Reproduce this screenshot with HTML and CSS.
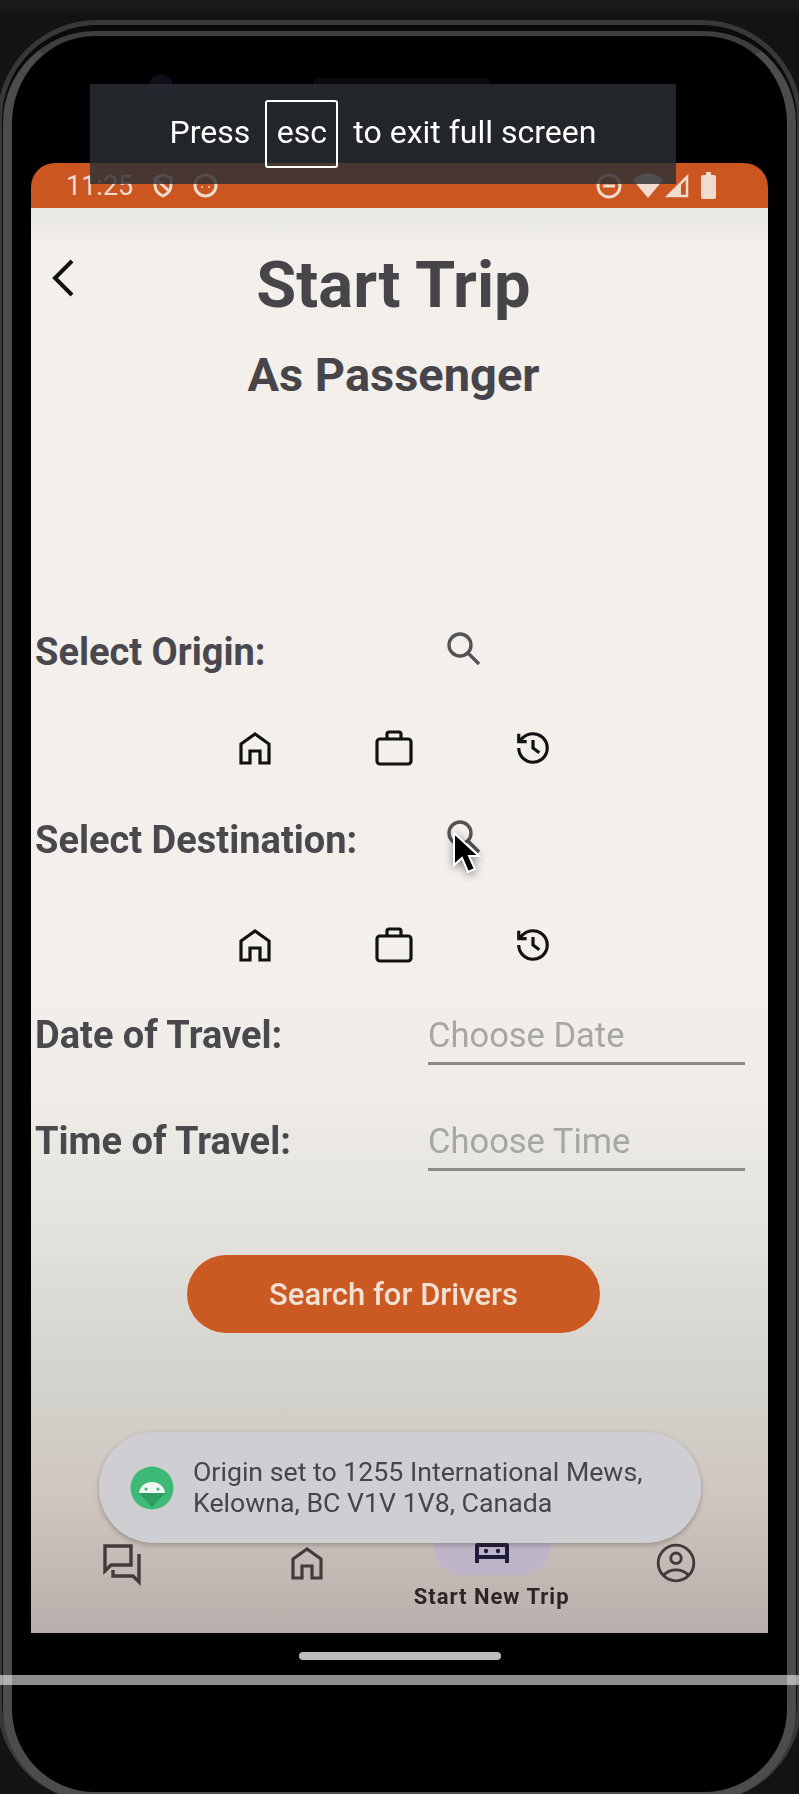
FILE: index.html
```html
<!DOCTYPE html>
<html lang="en">
<head>
    <meta charset="UTF-8">
    <meta name="viewport" content="width=device-width, initial-scale=1.0">
    <title>Start Trip</title>
    <link rel="stylesheet" href="styles.css">
</head>
<body>
    <div class="device">
        <div class="ring-outer"></div>
        <div class="ring-inner"></div>
        <div class="camera"></div>
        <div class="speaker"></div>

        <div class="screen">
            <div class="status-bar">
                <div class="status-left">
                    <span class="clock">11:25</span>
                    <svg class="status-icon" width="22" height="25" viewBox="0 0 22 25" fill="none" stroke="currentColor" stroke-width="3">
                        <path d="M11 2l8 3v7c0 5-3.500 9-8 11-4.500-2-8-6-8-11V5z"/>
                        <path d="M4 6l14 13"/>
                    </svg>
                    <svg class="status-icon" width="25" height="25" viewBox="0 0 25 25" fill="none" stroke="currentColor" stroke-width="3">
                        <circle cx="12.500" cy="12.500" r="10.500"/>
                        <circle cx="9" cy="14" r="1" fill="currentColor" stroke="none"/>
                        <circle cx="16" cy="14" r="1" fill="currentColor" stroke="none"/>
                    </svg>
                </div>
                <div class="status-right">
                    <svg class="status-icon" width="26" height="26" viewBox="0 0 26 26" fill="none" stroke="currentColor" stroke-width="3">
                        <circle cx="13" cy="13" r="11"/>
                        <path d="M7 13h12"/>
                    </svg>
                    <svg class="status-icon wifi" width="30" height="25" viewBox="0 0 30 25" fill="currentColor">
                        <path d="M0 7C8-2 22-2 30 7L15 25z"/>
                    </svg>
                    <svg class="status-icon signal" width="24" height="24" viewBox="0 0 24 24" fill="none" stroke="currentColor" stroke-width="2.500">
                        <path d="M3 22L22 3v19z" fill="none"/>
                        <path d="M3 22l13-13v13z" fill="currentColor" stroke="none"/>
                    </svg>
                    <svg class="status-icon battery" width="15" height="27" viewBox="0 0 15 27" fill="currentColor">
                        <path d="M5 0h5v3h3a2 2 0 0 1 2 2v20a2 2 0 0 1-2 2H2a2 2 0 0 1-2-2V5a2 2 0 0 1 2-2h3z"/>
                    </svg>
                </div>
            </div>

            <div class="content">
                <div class="trip-form">
                    <header class="page-header">
                        <svg class="back" width="24" height="38" viewBox="0 0 24 38" fill="none" stroke="#111" stroke-width="4">
                            <path d="M21 2L4 19l17 17"/>
                        </svg>
                        <h1>Start Trip</h1>
                    </header>
                    <h2>As Passenger</h2>

                    <div class="form-row origin-row">
                        <span class="label">Select Origin:</span>
                        <svg class="search" width="34" height="34" viewBox="0 0 34 34" fill="none" stroke="#545256" stroke-width="3.400">
                            <circle cx="13" cy="13" r="11"/>
                            <path d="M21 21l11 11"/>
                        </svg>
                    </div>
                    <div class="shortcuts first-shortcuts">
                        <svg class="place-icon" width="32" height="33" viewBox="0 0 32 33" fill="none" stroke="#111" stroke-width="3.200">
                            <path d="M2 31V12L16 2l14 10v19h-9V19H11v12z"/>
                        </svg>
                        <svg class="place-icon" width="38" height="36" viewBox="0 0 38 36" fill="none" stroke="#111" stroke-width="3.200">
                            <rect x="2" y="9" width="34" height="25" rx="3"/>
                            <path d="M12 9V4a2 2 0 0 1 2-2h10a2 2 0 0 1 2 2v5"/>
                        </svg>
                        <svg class="place-icon" width="38" height="38" viewBox="0 0 24 24" fill="none" stroke="#111" stroke-width="2">
                            <path d="M3 12a9 9 0 1 0 9-9 9.750 9.750 0 0 0-6.740 2.740L3 8"/>
                            <path d="M3 3v5h5"/>
                            <path d="M12 7v5l4 3"/>
                        </svg>
                    </div>

                    <div class="form-row dest-row">
                        <span class="label">Select Destination:</span>
                        <svg class="search" width="34" height="34" viewBox="0 0 34 34" fill="none" stroke="#545256" stroke-width="3.400">
                            <circle cx="13" cy="13" r="11"/>
                            <path d="M21 21l11 11"/>
                        </svg>
                    </div>
                    <div class="shortcuts second-shortcuts">
                        <svg class="place-icon" width="32" height="33" viewBox="0 0 32 33" fill="none" stroke="#111" stroke-width="3.200">
                            <path d="M2 31V12L16 2l14 10v19h-9V19H11v12z"/>
                        </svg>
                        <svg class="place-icon" width="38" height="36" viewBox="0 0 38 36" fill="none" stroke="#111" stroke-width="3.200">
                            <rect x="2" y="9" width="34" height="25" rx="3"/>
                            <path d="M12 9V4a2 2 0 0 1 2-2h10a2 2 0 0 1 2 2v5"/>
                        </svg>
                        <svg class="place-icon" width="38" height="38" viewBox="0 0 24 24" fill="none" stroke="#111" stroke-width="2">
                            <path d="M3 12a9 9 0 1 0 9-9 9.750 9.750 0 0 0-6.740 2.740L3 8"/>
                            <path d="M3 3v5h5"/>
                            <path d="M12 7v5l4 3"/>
                        </svg>
                    </div>

                    <div class="form-row date-row">
                        <span class="label">Date of Travel:</span>
                        <span class="field">Choose Date</span>
                    </div>
                    <div class="form-row time-row">
                        <span class="label">Time of Travel:</span>
                        <span class="field">Choose Time</span>
                    </div>

                    <button class="search-btn">Search for Drivers</button>
                </div>

                <nav class="bottom-nav">
                    <a class="nav-item" href="#chat">
                        <svg width="48" height="48" viewBox="0 0 24 24" fill="none" stroke="#433b3b" stroke-width="1.700">
                            <path d="M3 3h13v9.500H6L3 15.500z"/>
                            <path d="M20 7v14l-3-3H7v-3"/>
                        </svg>
                    </a>
                    <a class="nav-item nav-home" href="#home">
                        <svg width="32" height="33" viewBox="0 0 32 33" fill="none" stroke="#433b3b" stroke-width="3.200">
                            <path d="M2 31V12L16 2l14 10v19h-9V19H11v12z"/>
                        </svg>
                    </a>
                    <a class="nav-item active" href="#trip">
                        <span class="nav-pill">
                            <svg width="34" height="20" viewBox="0 0 34 20" fill="#1f1b3a">
                                <path d="M0 2a2 2 0 0 1 2-2h30a2 2 0 0 1 2 2v18h-4v-4H4v4H0zm4 2v8h26V4z"/>
                                <circle cx="11" cy="8" r="2.200"/>
                                <circle cx="23" cy="8" r="2.200"/>
                            </svg>
                        </span>
                        <span class="nav-label">Start New Trip</span>
                    </a>
                    <a class="nav-item" href="#profile">
                        <svg width="46" height="46" viewBox="0 0 24 24" fill="none" stroke="#433b3b" stroke-width="1.500">
                            <circle cx="12" cy="12" r="9.300"/>
                            <circle cx="12" cy="9.500" r="2.700"/>
                            <path d="M5.700 18.200c1.700-1.700 3.900-2.600 6.300-2.600s4.600.9 6.300 2.600"/>
                        </svg>
                    </a>
                </nav>
            </div>

            <div class="toast">
                <svg class="toast-icon" width="44" height="44" viewBox="0 0 44 44">
                    <circle cx="22" cy="22" r="21.500" fill="#3dba76"/>
                    <path d="M9 27l13 14 13-14z" fill="#2f9c60"/>
                    <path d="M9 27c1-7 6-11 13-11s12 4 13 11z" fill="#f2f6f2"/>
                    <circle cx="16" cy="23" r="1.500" fill="#3dba76"/>
                    <circle cx="28" cy="23" r="1.500" fill="#3dba76"/>
                </svg>
                <p>Origin set to 1255 International Mews,<br>Kelowna, BC V1V 1V8, Canada</p>
            </div>
        </div>

        <div class="home-indicator"></div>
        <div class="scrub-line"></div>

        <svg class="cursor" width="30" height="44" viewBox="0 0 30 44">
            <path d="M3 2v32l8-7 6 14 7-3-6-13h10z" fill="#000" stroke="#fff" stroke-width="2"/>
        </svg>

        <div class="esc-notice">
            <span class="notice-text">Press</span>
            <span class="esc-key">esc</span>
            <span class="notice-text">to exit full screen</span>
        </div>
    </div>
</body>
</html>
```

FILE: styles.css
```css
* {
    box-sizing: border-box;
}

body {
    margin: 0;
    background-color: #000;
    font-family: Roboto, "Liberation Sans", sans-serif;
}

.device {
    position: relative;
    z-index: 0;
    height: 1794px;
    overflow: hidden;
    background-color: #121314;
    border-top: 12px solid #18191a;
}

/* phone body */
.ring-outer {
    position: absolute;
    z-index: -1;
    top: 8px;
    left: -3px;
    right: -3px;
    height: 1782px;
    border: 5px solid #383838;
    border-radius: 100px;
    background-color: #0a0a0a;
}

.ring-inner {
    position: absolute;
    z-index: -1;
    top: 19px;
    left: 3px;
    right: 3px;
    height: 1770px;
    border: 9px solid #4c4c4c;
    border-top: 5px solid #3e3e3e;
    border-radius: 92px;
    background-color: #000;
}

.camera {
    position: absolute;
    z-index: -1;
    top: 62px;
    left: 149px;
    width: 24px;
    height: 24px;
    border-radius: 50%;
    background-color: #0e0f18;
}

.speaker {
    position: absolute;
    z-index: -1;
    top: 66px;
    left: 313px;
    width: 177px;
    height: 17px;
    border-radius: 4px;
    background-color: #0b0b0b;
}

.screen {
    position: relative;
    margin: 151px 31px 0;
    height: 1470px;
    display: flex;
    flex-direction: column;
    border-radius: 24px 24px 0 0;
    overflow: hidden;
    filter: blur(0.5px);
}

.status-bar {
    height: 45px;
    flex-shrink: 0;
    display: flex;
    justify-content: space-between;
    align-items: center;
    padding: 0 52px 0 35px;
    background-color: #cb5620;
    color: #f0dccf;
}

.status-left, .status-right {
    display: flex;
    align-items: center;
}

.clock {
    font-size: 27px;
    margin-right: 19px;
}

.status-left .status-icon + .status-icon {
    margin-left: 19px;
}

.status-right .wifi {
    margin-left: 11px;
}

.status-right .signal {
    margin-left: 2px;
}

.status-right .battery {
    margin-left: 12px;
}

.content {
    flex: 1;
    display: flex;
    flex-direction: column;
    justify-content: space-between;
    background: linear-gradient(to bottom, #e8e6e2 0, #f3f0ec 3%, #f3f0ec 52%, #efece8 62%, #e5e3de 71%, #dcdad4 77%, #d2d0ca 84%, #cfc5bf 91%, #b9aeab 100%);
}

.trip-form {
    padding: 42px 16px 0 4px;
    display: flex;
    flex-direction: column;
}

.page-header {
    position: relative;
    text-align: center;
}

.back {
    position: absolute;
    left: 16px;
    top: 9px;
}

h1 {
    margin: 0;
    font-size: 65px;
    line-height: 70px;
    font-weight: 700;
    color: #47454a;
}

h2 {
    margin: 25px 0 0;
    text-align: center;
    font-size: 47px;
    line-height: 60px;
    font-weight: 700;
    color: #47454a;
}

.form-row {
    height: 60px;
    display: grid;
    grid-template-columns: 393px 1fr;
    align-items: center;
}

.origin-row {
    margin-top: 217px;
}

.dest-row {
    margin-top: 32px;
}

.date-row {
    margin-top: 30px;
}

.time-row {
    margin-top: 46px;
}

.label {
    font-size: 38px;
    font-weight: 700;
    color: #4a484c;
}

.search {
    margin-left: 19px;
    margin-top: -6px;
}

.shortcuts {
    height: 60px;
    display: flex;
    justify-content: center;
    align-items: center;
}

.first-shortcuts {
    margin-top: 36px;
}

.second-shortcuts {
    margin-top: 45px;
}

/* centres sit 139px apart */
.place-icon {
    flex: 0 0 38px;
    margin: 0 50.500px;
}

.field {
    display: block;
    height: 60px;
    line-height: 60px;
    border-bottom: 3px solid #8c8a85;
    font-size: 34.500px;
    color: #a8a6a1;
    margin-right: 7px;
}

.search-btn {
    align-self: center;
    width: 413px;
    height: 78px;
    margin-top: 84px;
    border: none;
    border-radius: 39px;
    background-color: #cb5a22;
    color: #f2e0d5;
    font-family: inherit;
    font-size: 31px;
    font-weight: 500;
}

.bottom-nav {
    display: grid;
    grid-template-columns: repeat(4, 1fr);
    height: 117px;
}

.nav-item {
    display: flex;
    flex-direction: column;
    align-items: center;
    padding-top: 24px;
    color: #2a2526;
    text-decoration: none;
}

.nav-item.nav-home {
    padding-top: 31px;
}

.nav-item.active {
    padding-top: 0;
}

.nav-pill {
    width: 118px;
    height: 59px;
    display: flex;
    justify-content: center;
    align-items: flex-end;
    padding-bottom: 12px;
    border-radius: 30px;
    background-color: #bfb5c9;
}

.nav-label {
    margin-top: 9px;
    font-size: 22px;
    font-weight: 700;
    letter-spacing: 1px;
}

.toast {
    position: absolute;
    left: 68px;
    bottom: 90px;
    width: 602px;
    height: 111px;
    display: flex;
    align-items: center;
    gap: 19px;
    padding-left: 31px;
    border-radius: 55px;
    background-color: #cfcfd3;
    box-shadow: 0 2px 5px rgba(60, 50, 50, 0.35);
}

.toast p {
    margin: 0;
    font-size: 26.700px;
    line-height: 31px;
    color: #45464a;
}

.home-indicator {
    width: 202px;
    height: 8px;
    margin: 19px auto 0;
    border-radius: 4px;
    background-color: #bdbdbd;
}

.scrub-line {
    height: 10px;
    margin-top: 15px;
    background-color: rgba(255, 255, 255, 0.56);
}

.cursor {
    position: absolute;
    left: 451px;
    top: 819px;
    filter: drop-shadow(0 2px 4px rgba(0, 0, 0, 0.45));
}

.esc-notice {
    position: absolute;
    left: 90px;
    top: 72px;
    width: 586px;
    height: 100px;
    display: flex;
    justify-content: center;
    align-items: center;
    gap: 15px;
    background-color: rgba(42, 46, 51, 0.815);
    color: #fff;
    font-size: 32px;
}

.notice-text {
    margin-bottom: 4px;
}

.esc-key {
    width: 73px;
    height: 68px;
    line-height: 61px;
    text-align: center;
    border: 2px solid #fff;
    border-radius: 3px;
}
```
